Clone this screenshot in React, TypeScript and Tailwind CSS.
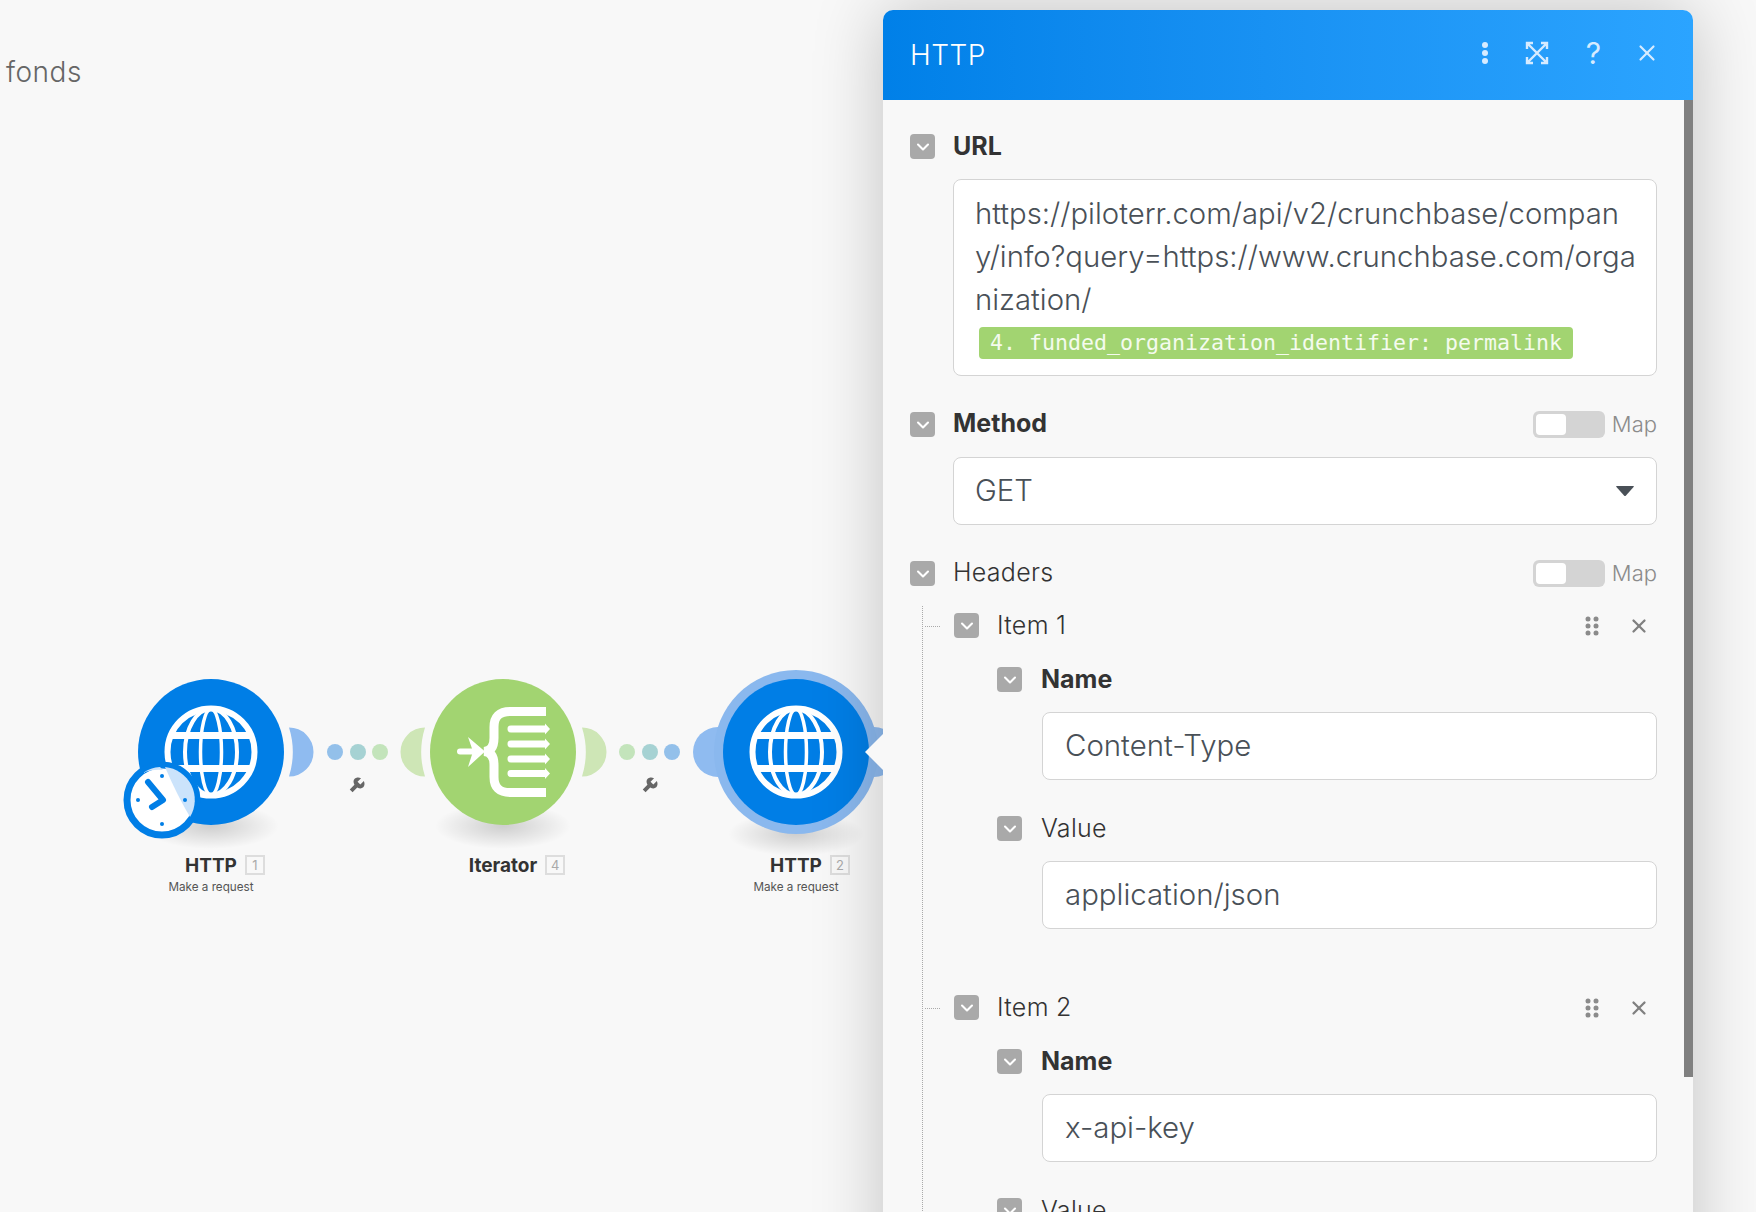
import { ChevronDown, X } from 'lucide-react'

function Globe({ cx, cy }: { cx: number; cy: number }) {
  return (
    <g fill="none" stroke="#fff" strokeWidth="6" transform={`translate(${cx} ${cy})`}>
      <circle r="43.500" />
      <ellipse rx="10.500" ry="43" strokeWidth="3.500" />
      <ellipse rx="26" ry="43" strokeWidth="4" />
      <path d="M-40 -16.500H40M-40 16.500H40" strokeWidth="7" />
    </g>
  )
}

function Wrench({ x, y }: { x: number; y: number }) {
  return (
    <path
      transform={`translate(${x} ${y}) rotate(45) scale(1.1)`}
      fill="#666"
      d="M-1.800 -2.500V-7C-4.500 -6 -5.500 -4 -5.500 -2.500C-5.500 -.5 -4 .8 -1.800 1.500V7.500H1.800V1.500C4 .8 5.500 -.5 5.500 -2.500C5.500 -4 4.500 -6 1.800 -7V-2.500Z"
    />
  )
}

function Scenario() {
  return (
    <svg className="absolute left-0 top-0" width="900" height="900" viewBox="0 0 900 900">
      <defs>
        <radialGradient id="nodeShadow">
          <stop offset="0%" stopColor="#000" stopOpacity="0.17" />
          <stop offset="100%" stopColor="#000" stopOpacity="0" />
        </radialGradient>
      </defs>
      <ellipse cx="211" cy="826" rx="68" ry="23" fill="url(#nodeShadow)" />
      <ellipse cx="503" cy="826" rx="68" ry="23" fill="url(#nodeShadow)" />
      <ellipse cx="796" cy="834" rx="68" ry="22" fill="url(#nodeShadow)" />

      {/* HTTP 1 */}
      <path d="M289 727.500A24.500 24.500 0 0 1 289 776.500A82 82 0 0 0 289 727.500Z" fill="#8fbbf0" />
      <circle cx="211" cy="752" r="73" fill="#007ee6" />
      <Globe cx={211} cy={752} />
      <circle cx="162" cy="800" r="35" fill="#fff" stroke="#007ee6" strokeWidth="7" />
      <path d="M165 767Q177 795 190 817A33 33 0 0 0 165 767Z" fill="#cbe3fb" />
      <path d="M143 773A33 33 0 0 1 160 767L163 770Q152 769 143 773Z" fill="#cbe3fb" />
      <path d="M148 782L163 800L152 807" fill="none" stroke="#007ee6" strokeWidth="6" strokeLinecap="round" strokeLinejoin="round" />
      <g fill="#007ee6">
        <circle cx="162" cy="776" r="2" />
        <circle cx="162" cy="824" r="2" />
        <circle cx="138" cy="800" r="2" />
        <circle cx="185" cy="800" r="2" />
      </g>

      {/* link 1 */}
      <circle cx="335" cy="752" r="8" fill="#93c0ea" />
      <circle cx="358" cy="752" r="8" fill="#a6d2d3" />
      <circle cx="380" cy="752" r="8" fill="#c3e4bb" />
      <Wrench x={357} y={785} />

      {/* Iterator */}
      <path d="M425 727.500A24.500 24.500 0 0 0 425 776.500A82 82 0 0 1 425 727.500Z" fill="#cee6b6" />
      <path d="M582 727.500A24.500 24.500 0 0 1 582 776.500A82 82 0 0 0 582 727.500Z" fill="#cee6b6" />
      <circle cx="503" cy="752" r="73" fill="#a2d471" />
      <path
        d="M546 711.500H510Q494 711.500 494 727V738Q494 751 484 751.500Q494 752 494 765V777Q494 792.500 510 792.500H546"
        fill="none"
        stroke="#fff"
        strokeWidth="9"
      />
      <path d="M460 751.500H478" stroke="#fff" strokeWidth="6" strokeLinecap="round" />
      <path d="M468 737L485 751.500L468 767L473 751.500Z" fill="#fff" />
      <g fill="#fff">
        <path d="M511 725.500H545V723.500L550 729L545 734.500V732.500H511A3.500 3.500 0 0 1 511 725.500Z" />
        <path d="M511 740.500H545V738.500L550 744L545 749.500V747.500H511A3.500 3.500 0 0 1 511 740.500Z" />
        <path d="M511 755.500H545V753.500L550 759L545 764.500V762.500H511A3.500 3.500 0 0 1 511 755.500Z" />
        <path d="M511 770H545V768L550 773.500L545 779V777H511A3.500 3.500 0 0 1 511 770Z" />
      </g>

      {/* link 2 */}
      <circle cx="627" cy="752" r="8" fill="#c3e4bb" />
      <circle cx="650" cy="752" r="8" fill="#a6d2d3" />
      <circle cx="672" cy="752" r="8" fill="#93c0ea" />
      <Wrench x={650} y={785} />

      {/* HTTP 2, selected */}
      <circle cx="718" cy="752" r="25" fill="#8fbbf0" />
      <circle cx="874" cy="752" r="25" fill="#8fbbf0" />
      <circle cx="796" cy="752" r="82" fill="#8ab8ee" />
      <circle cx="796" cy="752" r="73" fill="#007ee6" />
      <Globe cx={796} cy={752} />
    </svg>
  )
}

function NodeLabel({ x, title, num, sub }: { x: string; title: string; num: number; sub?: string }) {
  return (
    <div className={`absolute top-[854px] flex w-[200px] flex-col items-center ${x}`}>
      <div className="relative">
        <span className="text-[19px] leading-[22px] font-bold text-[#333]">{title}</span>
        <span className="absolute left-[calc(100%+8px)] top-[1px] flex h-[20px] w-[20px] items-center justify-center border-2 border-[#ddd] text-[13px] leading-none text-[#aaa]">
          {num}
        </span>
      </div>
      {sub && <span className="mt-[1px] text-[11.700px] leading-[16px] text-[#555]">{sub}</span>}
    </div>
  )
}

function Toggle({ className }: { className: string }) {
  return (
    <div className={`flex h-[25px] w-[25px] shrink-0 items-center justify-center rounded-[4px] bg-[#a9a9a9] ${className}`}>
      <ChevronDown size={20} strokeWidth={2.500} color="#fff" />
    </div>
  )
}

function MapSwitch() {
  return (
    <div className="flex items-center gap-[7px]">
      <div className="flex h-[27px] w-[72px] items-center rounded-[6px] bg-[#d4d4d4] pl-[3px]">
        <div className="h-[21px] w-[30px] rounded-[4px] bg-white" />
      </div>
      <span className="text-[22px] leading-[27px] font-light text-[#8b8b8b]">Map</span>
    </div>
  )
}

function Label({ children, bold }: { children: string; bold?: boolean }) {
  return (
    <div className={`text-[25px] leading-[25px] text-[#333] ${bold ? 'font-bold' : 'font-light tracking-[0.3px]'}`}>{children}</div>
  )
}

function TextBox({ value }: { value: string }) {
  return (
    <div className="flex h-[68px] items-center rounded-[8px] border border-[#d4d4d4] bg-white pl-[22px] text-[29.400px] font-light text-[#495057]">
      {value}
    </div>
  )
}

function ItemField({ label, value, bold }: { label: string; value: string; bold?: boolean }) {
  return (
    <div>
      <div className="flex items-center gap-[19px]">
        <Toggle className="" />
        <Label bold={bold}>{label}</Label>
      </div>
      <div className="mt-5 pl-[45px]">
        <TextBox value={value} />
      </div>
    </div>
  )
}

function ItemBlock({ name, nameValue, value }: { name: string; nameValue: string; value: string }) {
  return (
    <div className="relative">
      <div className="absolute left-[-29px] top-[13px] w-[15px] border-t border-dotted border-[#aaa]" />
      <div className="flex h-[25px] items-center">
        <Toggle className="mr-[18px]" />
        <Label>{name}</Label>
        <div className="ml-auto flex items-center gap-[26px] pr-[7px]">
          <svg width="14" height="20" viewBox="0 0 14 20" fill="#8b8b8b" className="mr-[3px]">
            <circle cx="3" cy="3" r="2.500" />
            <circle cx="11" cy="3" r="2.500" />
            <circle cx="3" cy="10" r="2.500" />
            <circle cx="11" cy="10" r="2.500" />
            <circle cx="3" cy="17" r="2.500" />
            <circle cx="11" cy="17" r="2.500" />
          </svg>
          <X size={22} strokeWidth={2.500} color="#808080" />
        </div>
      </div>
      <div className="mt-[29px] flex flex-col gap-9 pl-[43px]">
        <ItemField label="Name" value={nameValue} bold />
        <ItemField label="Value" value={value} />
      </div>
    </div>
  )
}

function Panel() {
  return (
    <div className="absolute left-[883px] top-[10px] h-[1300px] w-[810px] overflow-hidden rounded-t-[10px] bg-[#f8f8f8] shadow-[0_0_70px_rgba(0,0,0,0.22)]">
      <div className="flex h-[90px] items-center bg-gradient-to-r from-[#0080e8] to-[#2ba4ff] pl-[27px] pr-[33px] text-white">
        <span className="text-[28px] font-light tracking-[0.5px]">HTTP</span>
        <div className="ml-auto flex items-center text-[#d6ebff]">
          <svg width="8" height="22" viewBox="0 0 8 22" fill="currentColor" className="mr-[36px] mb-1">
            <circle cx="4" cy="3" r="3" />
            <circle cx="4" cy="11" r="3" />
            <circle cx="4" cy="19" r="3" />
          </svg>
          <svg width="24" height="24" viewBox="0 0 24 24" fill="none" stroke="currentColor" strokeWidth="2.400" className="mr-[37px] mb-1">
            <path d="M2 8V2H8M16 2H22V8M22 16V22H16M8 22H2V16M2 2L22 22M22 2L2 22" />
          </svg>
          <span className="mr-[33px] mb-1 text-[30px] leading-none font-normal">?</span>
          <X size={26} strokeWidth={2} className="mb-1" />
        </div>
      </div>

      <div className="absolute bottom-[233px] right-0 top-[90px] w-[9px] bg-[#808080]" />

      <div className="pl-[27px] pr-[36px]">
        {/* URL */}
        <div className="flex items-center gap-[18px] pt-[34px]">
          <Toggle className="" />
          <Label bold>URL</Label>
        </div>
        <div className="ml-[43px] mt-[20px] h-[197px] rounded-[8px] border border-[#d4d4d4] bg-white pl-[21px] pt-[12px] text-[29.300px] leading-[43px] font-light whitespace-nowrap text-[#495057]">
          https://piloterr.com/api/v2/crunchbase/compan
          <br />
          y/info?query=https://www.crunchbase.com/orga
          <br />
          nization/
          <div className="ml-[4px] mt-[6px] flex h-[32px] w-[594px] items-center rounded-[4px] bg-[#a2d471] pl-[11px] font-['DejaVu_Sans_Mono',monospace] text-[21.600px] leading-none font-normal whitespace-nowrap text-[#f4fbee]">
            4. funded_organization_identifier: permalink
          </div>
        </div>

        {/* Method */}
        <div className="mt-[35px] flex h-[27px] items-center">
          <Toggle className="mr-[18px]" />
          <div className="mb-[3px]">
            <Label bold>Method</Label>
          </div>
          <div className="ml-auto">
            <MapSwitch />
          </div>
        </div>
        <div className="ml-[43px] mt-[19px] flex h-[68px] items-center justify-between rounded-[8px] border border-[#d4d4d4] bg-white pl-[21px] pr-[21px] text-[29.300px] font-light text-[#495057]">
          GET
          <svg width="20" height="12" viewBox="0 0 20 12" fill="#495057">
            <path d="M1 1.500Q1 1 2 1H18Q19 1 19 1.500L11 10.500Q10 11.500 9 10.500Z" />
          </svg>
        </div>

        {/* Headers */}
        <div className="mt-[35px] flex h-[27px] items-center">
          <Toggle className="mr-[18px]" />
          <div className="mb-[2px]">
            <Label>Headers</Label>
          </div>
          <div className="ml-auto">
            <MapSwitch />
          </div>
        </div>
        <div className="ml-[12px] mt-[19px] flex flex-col gap-[66px] border-l border-dotted border-[#aaa] pl-[31px] pt-[7px] pb-[40px]">
          <ItemBlock name="Item 1" nameValue="Content-Type" value="application/json" />
          <ItemBlock name="Item 2" nameValue="x-api-key" value="" />
        </div>
      </div>
    </div>
  )
}

export default function App() {
  return (
    <div className="relative h-screen w-full overflow-hidden bg-[#f8f8f8] font-['Inter',sans-serif]">
      <div className="absolute left-[6px] top-[52px] text-[28px] leading-[40px] font-light tracking-[0.5px] text-[#666]">fonds</div>
      <Scenario />
      <NodeLabel x="left-[111px]" title="HTTP" num={1} sub="Make a request" />
      <NodeLabel x="left-[403px]" title="Iterator" num={4} />
      <NodeLabel x="left-[696px]" title="HTTP" num={2} sub="Make a request" />
      <Panel />
      {/* pointer from the panel onto the selected module */}
      <svg className="absolute left-[860px] top-[725px]" width="24" height="54" viewBox="0 0 24 54">
        <path d="M5 27L24 8V46Z" fill="#f8f8f8" />
      </svg>
    </div>
  )
}
